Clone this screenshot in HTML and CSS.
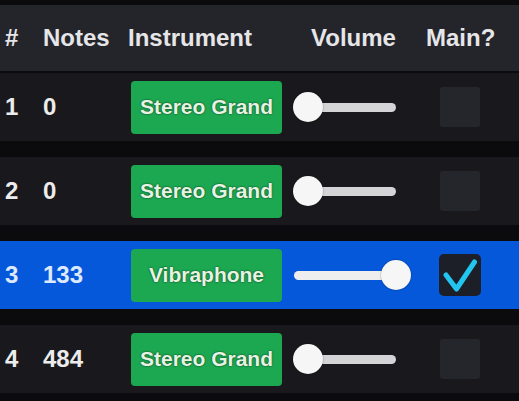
FILE: index.html
```html
<!doctype html>
<html lang="en-US">
    <head>
        <meta charset="utf-8"/>
        <title>Tracks</title>
        <link rel="stylesheet" href="styles.css">
    </head>
    <body>
        <main class="tracks">
            <div class="header">
                <span>#</span>
                <span>Notes</span>
                <span>Instrument</span>
                <span>Volume</span>
                <span>Main?</span>
            </div>

            <div class="track">
                <span class="num">1</span>
                <span class="notes">0</span>
                <div class="instrument">Stereo Grand</div>
                <div class="volume">
                    <div class="bar"></div>
                    <div class="knob" style="left: 0px"></div>
                </div>
                <div class="main"></div>
            </div>

            <div class="track">
                <span class="num">2</span>
                <span class="notes">0</span>
                <div class="instrument">Stereo Grand</div>
                <div class="volume">
                    <div class="bar"></div>
                    <div class="knob" style="left: 0px"></div>
                </div>
                <div class="main"></div>
            </div>

            <div class="track selected">
                <span class="num">3</span>
                <span class="notes">133</span>
                <div class="instrument">Vibraphone</div>
                <div class="volume">
                    <div class="bar"></div>
                    <div class="knob" style="left: 88px"></div>
                </div>
                <div class="main checked">
                    <svg width="42" height="42" viewBox="0 0 42 42">
                        <polyline points="7,21 17.5,35 35.5,8" fill="none" stroke="#22c4f0" stroke-width="5" stroke-linecap="round" stroke-linejoin="round"/>
                    </svg>
                </div>
            </div>

            <div class="track">
                <span class="num">4</span>
                <span class="notes">484</span>
                <div class="instrument">Stereo Grand</div>
                <div class="volume">
                    <div class="bar"></div>
                    <div class="knob" style="left: 0px"></div>
                </div>
                <div class="main"></div>
            </div>
        </main>
    </body>
</html>
```

FILE: styles.css
```css
body {
    background-color: #0b0b0e;
    margin: 0;
    color: #ececec;
    font-family: "Liberation Sans", Arial, sans-serif;
    font-weight: bold;
}

.tracks {
    display: flex;
    flex-direction: column;
    padding-top: 5px;
}

.header {
    display: grid;
    grid-template-columns: 38px 85px 183px 115px auto;
    align-items: center;
    height: 66px;
    padding-left: 5px;
    margin-bottom: 2px;
    background-color: #24252b;
    font-size: 24px;
    color: #e6e6e8;
}

.track {
    display: grid;
    grid-template-columns: 38px 88px 162px 147px 42px;
    align-items: center;
    height: 68px;
    padding-left: 5px;
    margin-bottom: 16px;
    background-color: #19191d;
    font-size: 24px;
}

.track.selected {
    background-color: #0658db;
    color: #dde9ff;
}

.instrument {
    display: flex;
    align-items: center;
    justify-content: center;
    width: 151px;
    height: 53px;
    border-radius: 4px;
    background-color: #1ca851;
    color: #e7f3e2;
    font-size: 21px;
    text-shadow: 0 0 2px rgba(0, 0, 0, 0.75);
}

.volume {
    position: relative;
    width: 118px;
    height: 30px;
}

.volume .bar {
    position: absolute;
    left: 1px;
    right: 15px;
    top: 11px;
    height: 9px;
    border-radius: 5px;
    background-color: #d4d4d6;
}

.selected .volume .bar {
    background-color: #eeeeef;
}

.volume .knob {
    position: absolute;
    top: 0;
    width: 30px;
    height: 30px;
    border-radius: 50%;
    background-color: #f6f6f6;
    box-shadow: 0 0 2px rgba(0, 0, 0, 0.4);
}

.main {
    width: 40px;
    height: 40px;
    border-radius: 3px;
    background-color: #25262b;
}

.main.checked {
    width: 42px;
    height: 42px;
    margin-left: -1px;
    border-radius: 5px;
    background-color: #1c1f27;
}

.main svg {
    display: block;
}
```
